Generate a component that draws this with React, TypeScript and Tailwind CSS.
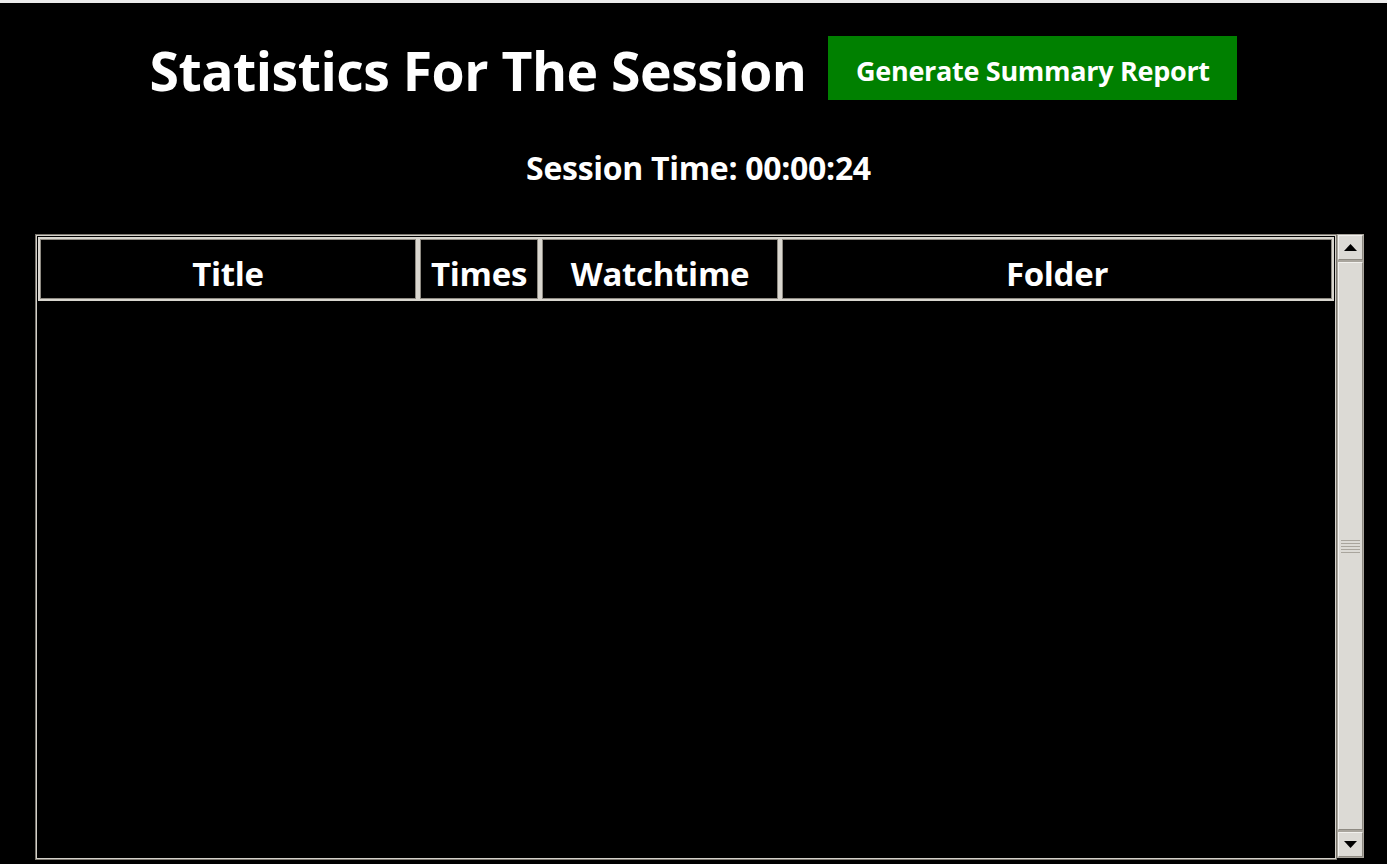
import React from "react";

const font = { fontFamily: '"Open Sans", "Noto Sans", "Liberation Sans", sans-serif' };

function HeaderCell({ label, className }: { label: string; className: string }) {
  return (
    <div
      className={`flex items-center justify-center h-full border-2 border-[#d9d6cf] outline outline-1 outline-[#8e8a82] -outline-offset-[3px] text-white font-bold text-[33px] leading-none tracking-[-0.3px] ${className}`}
    >
      <span className="mt-[8px]">{label}</span>
    </div>
  );
}

export default function App() {
  return (
    <div className="w-[1387px] h-[864px] bg-black flex flex-col overflow-hidden" style={font}>
      <div className="h-[3px] bg-[#ececec]" />
      <div className="flex justify-center items-center gap-[22px] mt-[33px]">
        <h1 className="text-white font-bold text-[53.5px] leading-none tracking-[-0.5px] mt-[6px]">
          Statistics For The Session
        </h1>
        <button className="bg-[#008000] text-white font-bold text-[27px] w-[409px] h-[64px] tracking-[-0.3px] leading-none pt-[5px]">
          Generate Summary Report
        </button>
      </div>
      <div className="flex justify-center mt-[52px] text-white font-bold text-[32px] leading-none tracking-[-0.3px]">
        <span className="ml-[10px]">Session Time: 00:00:24</span>
      </div>
      <div className="flex mt-[50px] ml-[35px] w-[1329px] h-[626px]">
        <div className="flex-1 border-2 border-[#d4d1ca] outline outline-1 outline-[#7c7870] -outline-offset-1 p-[1px]">
          <div className="flex h-[64px]">
            <HeaderCell label="Title" className="w-[380px]" />
            <HeaderCell label="Times" className="w-[122px]" />
            <HeaderCell label="Watchtime" className="w-[240px]" />
            <HeaderCell label="Folder" className="flex-1" />
          </div>
        </div>
        <div className="w-[27px] h-[624px] bg-[#a9a59d] flex flex-col p-[1px] gap-[2px]">
          <div className="h-[25px] bg-[#dcdad5] flex items-center justify-center border border-[#f2f1ee] border-r-[#8e8a82] border-b-[#8e8a82]">
            <svg width="13" height="7" viewBox="0 0 13 7">
              <polygon points="0,7 6.5,0 13,7" fill="#000" />
            </svg>
          </div>
          <div className="flex-1 bg-[#dcdad5] flex items-center justify-center border border-[#f2f1ee] border-r-[#8e8a82] border-b-[#8e8a82]">
            <div className="flex flex-col gap-[2px]">
              <div className="w-[19px] h-[1px] bg-[#a9a59d]" />
              <div className="w-[19px] h-[1px] bg-[#a9a59d]" />
              <div className="w-[19px] h-[1px] bg-[#a9a59d]" />
              <div className="w-[19px] h-[1px] bg-[#a9a59d]" />
              <div className="w-[19px] h-[1px] bg-[#a9a59d]" />
            </div>
          </div>
          <div className="h-[25px] bg-[#dcdad5] flex items-center justify-center border border-[#f2f1ee] border-r-[#8e8a82] border-b-[#8e8a82]">
            <svg width="13" height="7" viewBox="0 0 13 7">
              <polygon points="0,0 13,0 6.5,7" fill="#000" />
            </svg>
          </div>
        </div>
      </div>
    </div>
  );
}
